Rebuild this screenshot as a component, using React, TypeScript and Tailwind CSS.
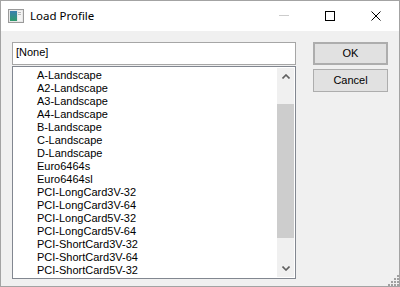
import React from 'react';

const profiles = [
  'A-Landscape',
  'A2-Landscape',
  'A3-Landscape',
  'A4-Landscape',
  'B-Landscape',
  'C-Landscape',
  'D-Landscape',
  'Euro6464s',
  'Euro6464sl',
  'PCI-LongCard3V-32',
  'PCI-LongCard3V-64',
  'PCI-LongCard5V-32',
  'PCI-LongCard5V-64',
  'PCI-ShortCard3V-32',
  'PCI-ShortCard3V-64',
  'PCI-ShortCard5V-32',
];

function AppIcon() {
  return (
    <svg width="16" height="16" viewBox="0 0 16 16">
      <defs>
        <linearGradient id="g1" x1="0" y1="0" x2="0" y2="1">
          <stop offset="0" stopColor="#3a7fb0" />
          <stop offset="1" stopColor="#2f9a6a" />
        </linearGradient>
      </defs>
      <rect x="0.5" y="1.5" width="15" height="13" fill="#e8e8e8" stroke="#9a9a9a" />
      <rect x="2" y="3" width="7" height="10" fill="url(#g1)" />
      <rect x="10" y="3" width="4" height="10" fill="#f4f4f4" />
      <rect x="10" y="4" width="3" height="1" fill="#b8b8b8" />
      <rect x="10" y="6" width="3" height="1" fill="#b8b8b8" />
    </svg>
  );
}

function SizeGrip() {
  const dots: [number, number][] = [];
  for (let i = 0; i < 4; i++) {
    for (let j = 0; j < 4; j++) {
      if (i + j >= 3) dots.push([1 + i * 3, 1 + j * 3]);
    }
  }
  return (
    <svg width="12" height="12" viewBox="0 0 12 12">
      {dots.map(([x, y]) => (
        <rect key={`${x}-${y}`} x={x} y={y} width="2" height="2" fill="#a0a0a0" />
      ))}
    </svg>
  );
}

export default function App() {
  return (
    <div className="w-[400px] h-[287px] border border-[#a3a3a3] flex flex-col relative bg-[#f0f0f0] overflow-hidden">
      {/* title bar */}
      <div className="h-[30px] bg-white flex items-center shrink-0">
        <div className="pl-[7px] pr-[6px] flex items-center">
          <AppIcon />
        </div>
        <span
          className="flex-1 text-[11.5px] text-black leading-none"
          style={{ fontFamily: '"Noto Sans", sans-serif' }}
        >
          Load Profile
        </span>
        <div className="flex h-full">
          <div className="w-[46px] h-full flex items-center justify-center">
            <svg width="10" height="10" viewBox="0 0 10 10">
              <rect x="0" y="4" width="10" height="1" fill="#cccccc" />
            </svg>
          </div>
          <div className="w-[46px] h-full flex items-center justify-center">
            <svg width="10" height="10" viewBox="0 0 10 10">
              <rect x="0.5" y="0.5" width="9" height="9" fill="none" stroke="#000" />
            </svg>
          </div>
          <div className="w-[46px] h-full flex items-center justify-center">
            <svg width="10" height="10" viewBox="0 0 10 10">
              <path d="M0.5 0.5 L9.5 9.5 M9.5 0.5 L0.5 9.5" stroke="#000" strokeWidth="1" />
            </svg>
          </div>
        </div>
      </div>

      {/* body */}
      <div
        className="flex-1 flex pt-[11px] pl-[11px] pb-[12px] gap-[17px] text-[11px] text-black"
        style={{ fontFamily: '"Liberation Sans", Arial, sans-serif' }}
      >
        <div className="w-[284px] flex flex-col gap-[1px]">
          <div className="h-[23px] bg-white border border-[#a6a6a6] flex items-center pl-[3px] pb-[2px]">
            [None]
          </div>
          <div className="flex-1 border border-[#828790] bg-white p-[1px] flex overflow-hidden">
            <div className="flex-1 pt-[1px] pl-[23px] overflow-hidden">
              {profiles.map((p) => (
                <div key={p} className="h-[13px] leading-[13px] whitespace-nowrap">
                  {p}
                </div>
              ))}
            </div>
            <div className="w-[17px] bg-[#f0f0f0] flex flex-col">
              <div className="h-[17px] flex items-center justify-center">
                <svg width="8" height="5" viewBox="0 0 8 5">
                  <path d="M0.5 4.5 L4 1 L7.5 4.5" fill="none" stroke="#606060" strokeWidth="1.6" />
                </svg>
              </div>
              <div className="h-[19px]" />
              <div className="h-[134px] bg-[#cdcdcd]" />
              <div className="flex-1" />
              <div className="h-[17px] flex items-center justify-center">
                <svg width="8" height="5" viewBox="0 0 8 5">
                  <path d="M0.5 0.5 L4 4 L7.5 0.5" fill="none" stroke="#606060" strokeWidth="1.6" />
                </svg>
              </div>
            </div>
          </div>
        </div>

        <div className="flex flex-col gap-[4px]">
          <button className="w-[75px] h-[23px] bg-[#e1e1e1] border-2 border-[#adadad] flex items-center justify-center pb-[1px]">
            OK
          </button>
          <button className="w-[75px] h-[23px] bg-[#e1e1e1] border border-[#adadad] flex items-center justify-center pb-[1px]">
            Cancel
          </button>
        </div>
      </div>

      <div className="absolute right-0 bottom-0">
        <SizeGrip />
      </div>
    </div>
  );
}
